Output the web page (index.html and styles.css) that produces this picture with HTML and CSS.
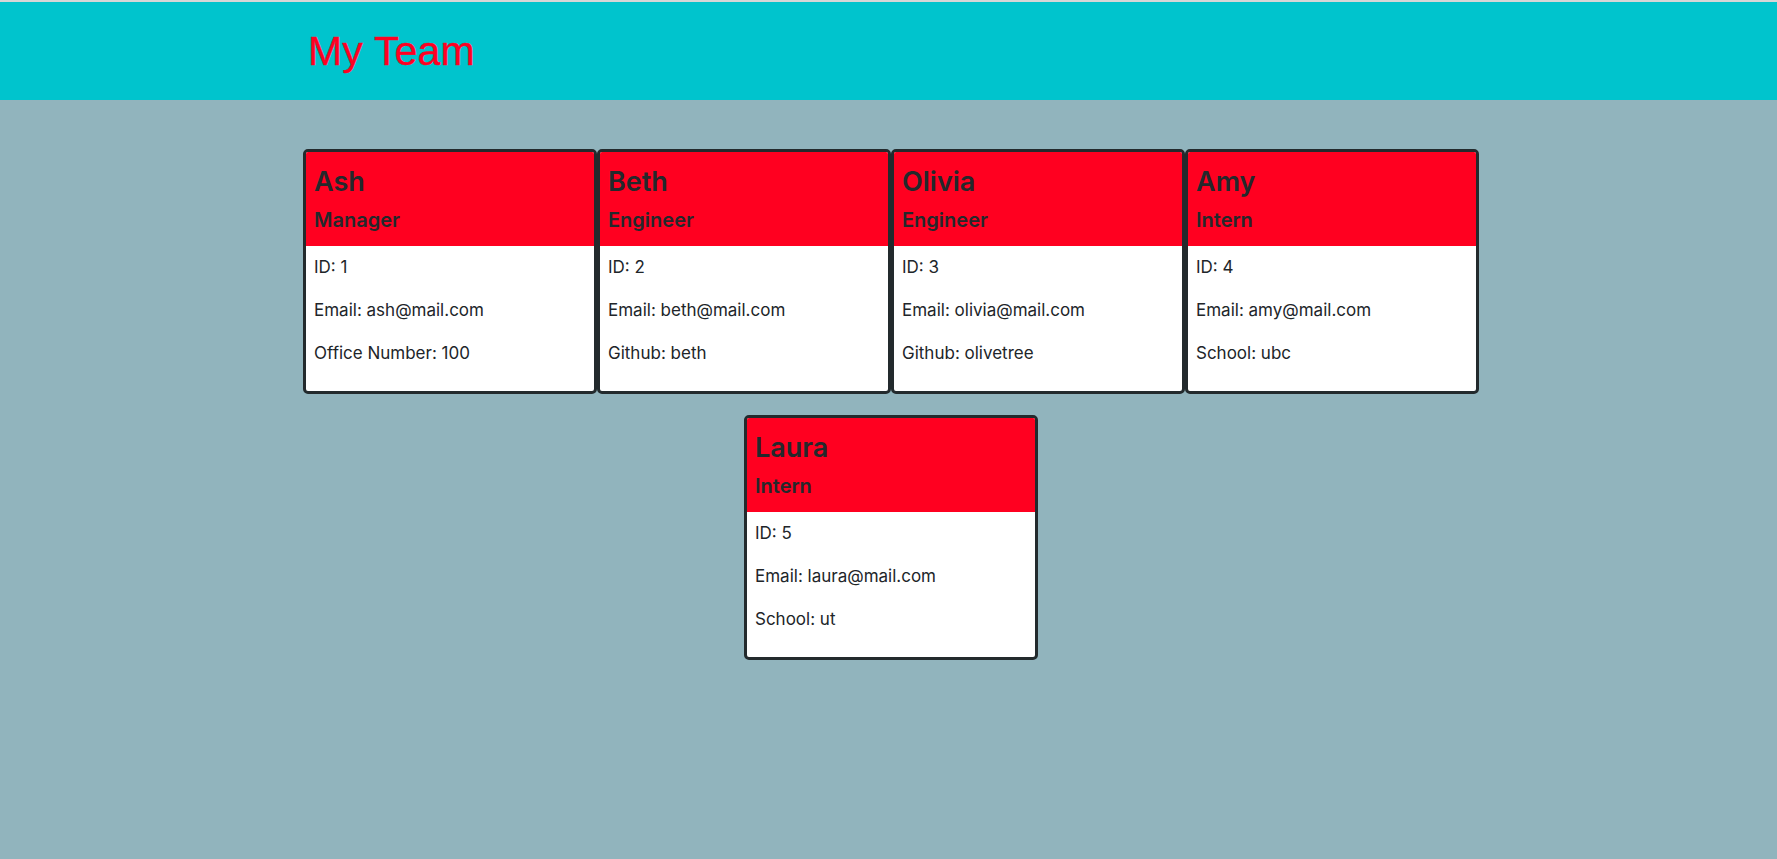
FILE: index.html
```html
<!DOCTYPE html>
<html lang="en">
<head>
<meta charset="utf-8">
<title>My Team</title>
<link rel="stylesheet" href="styles.css">
</head>
<body>
<header class="top-bar">
  <div class="wrap">
    <h1 class="title">My Team</h1>
  </div>
</header>
<main class="team">
  <div class="wrap cards">
    <div class="card">
      <div class="card-head">
        <h2 class="name">Ash</h2>
        <h3 class="role">Manager</h3>
      </div>
      <div class="card-body">
        <p>ID: 1</p>
        <p>Email: ash@mail.com</p>
        <p>Office Number: 100</p>
      </div>
    </div>
    <div class="card">
      <div class="card-head">
        <h2 class="name">Beth</h2>
        <h3 class="role">Engineer</h3>
      </div>
      <div class="card-body">
        <p>ID: 2</p>
        <p>Email: beth@mail.com</p>
        <p>Github: beth</p>
      </div>
    </div>
    <div class="card">
      <div class="card-head">
        <h2 class="name">Olivia</h2>
        <h3 class="role">Engineer</h3>
      </div>
      <div class="card-body">
        <p>ID: 3</p>
        <p>Email: olivia@mail.com</p>
        <p>Github: olivetree</p>
      </div>
    </div>
    <div class="card">
      <div class="card-head">
        <h2 class="name">Amy</h2>
        <h3 class="role">Intern</h3>
      </div>
      <div class="card-body">
        <p>ID: 4</p>
        <p>Email: amy@mail.com</p>
        <p>School: ubc</p>
      </div>
    </div>
    <div class="card">
      <div class="card-head">
        <h2 class="name">Laura</h2>
        <h3 class="role">Intern</h3>
      </div>
      <div class="card-body">
        <p>ID: 5</p>
        <p>Email: laura@mail.com</p>
        <p>School: ut</p>
      </div>
    </div>
  </div>
</main>
</body>
</html>
```
FILE: styles.css
```css
html, body {
  margin: 0;
  padding: 0;
}

body {
  background: #91b4bd;
  min-height: 100vh;
  font-family: "Inter", "Noto Sans", sans-serif;
  color: #212529;
}

.wrap {
  width: 1176px;
  margin: 0 auto;
}

.top-bar {
  background: #00c4cd;
  border-top: 2px solid #d6d6d6;
  height: 98px;
  display: flex;
  align-items: center;
  padding-left: 5px;
}

.title {
  margin: 0;
  padding-left: 5px;
  font-family: "Liberation Sans", Arial, sans-serif;
  font-size: 41px;
  line-height: 48px;
  font-weight: 400;
  letter-spacing: 0.2px;
  color: #ff0022;
  -webkit-text-stroke: 0.4px #ff0022;
}

.team {
  padding: 49px 0 0 5px;
}

.cards {
  display: flex;
  flex-wrap: wrap;
  justify-content: center;
  row-gap: 21px;
}

.card {
  width: 294px;
  box-sizing: border-box;
  border: 3px solid #232a2d;
  border-radius: 5px;
  background: #ffffff;
  overflow: hidden;
}

.card-head {
  background: #ff0020;
  padding: 14px 8px 13.6px;
}

.name {
  margin: 0 0 10px;
  font-size: 27px;
  line-height: 32.4px;
  font-weight: 600;
  color: #23292c;
}

.role {
  margin: 0;
  font-size: 20px;
  line-height: 24px;
  font-weight: 600;
  color: #23292c;
}

.card-body {
  padding: 8px;
}

.card-body p {
  margin: 0 0 17px;
  font-size: 17px;
  line-height: 26px;
}
```
